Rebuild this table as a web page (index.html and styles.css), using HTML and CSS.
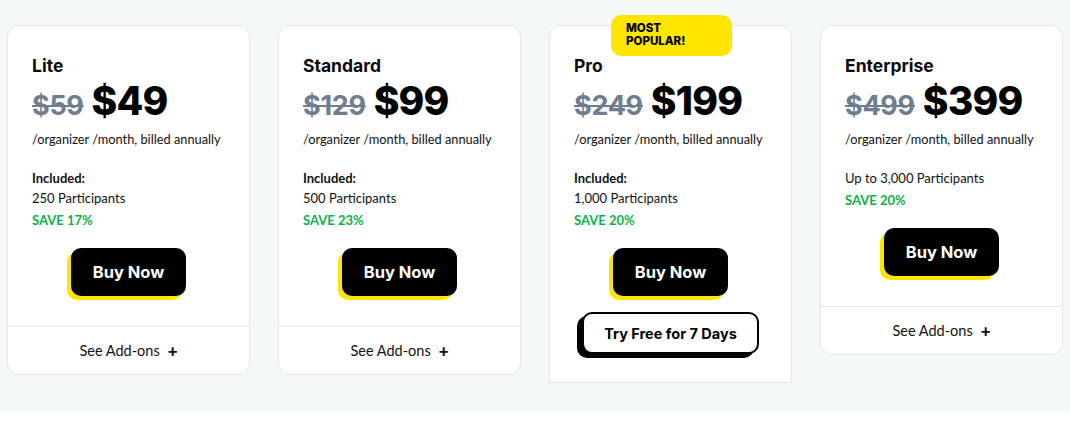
FILE: index.html
```html
<!DOCTYPE html>
<html>
<head>
<meta charset="utf-8">
<link rel="stylesheet" href="styles.css">
</head>
<body>
<section class="pricing">
  <div class="grid">
    <div class="card">
      <div class="card-body">
        <h3 class="plan">Lite</h3>
        <div class="price"><s class="old">$59</s> <span class="new">$49</span></div>
        <p class="per">/organizer /month, billed annually</p>
        <p class="inc-label">Included:</p>
        <p class="inc">250 Participants</p>
        <p class="save">SAVE 17%</p>
        <div class="actions"><a class="btn-buy">Buy Now</a></div>
      </div>
      <div class="addons">See Add-ons <span class="plus">+</span></div>
    </div>
    <div class="card">
      <div class="card-body">
        <h3 class="plan">Standard</h3>
        <div class="price"><s class="old">$129</s> <span class="new">$99</span></div>
        <p class="per">/organizer /month, billed annually</p>
        <p class="inc-label">Included:</p>
        <p class="inc">500 Participants</p>
        <p class="save">SAVE 23%</p>
        <div class="actions"><a class="btn-buy">Buy Now</a></div>
      </div>
      <div class="addons">See Add-ons <span class="plus">+</span></div>
    </div>
    <div class="card card-pro">
      <div class="badge">MOST<br>POPULAR!</div>
      <div class="card-body">
        <h3 class="plan">Pro</h3>
        <div class="price"><s class="old">$249</s> <span class="new">$199</span></div>
        <p class="per">/organizer /month, billed annually</p>
        <p class="inc-label">Included:</p>
        <p class="inc">1,000 Participants</p>
        <p class="save">SAVE 20%</p>
        <div class="actions">
          <a class="btn-buy">Buy Now</a>
          <a class="btn-try">Try Free for 7 Days</a>
        </div>
      </div>
    </div>
    <div class="card">
      <div class="card-body">
        <h3 class="plan">Enterprise</h3>
        <div class="price"><s class="old">$499</s> <span class="new">$399</span></div>
        <p class="per">/organizer /month, billed annually</p>
        <p class="inc inc-first">Up to 3,000 Participants</p>
        <p class="save">SAVE 20%</p>
        <div class="actions"><a class="btn-buy">Buy Now</a></div>
      </div>
      <div class="addons">See Add-ons <span class="plus">+</span></div>
    </div>
  </div>
</section>
</body>
</html>
```

FILE: styles.css
```css
* { box-sizing: border-box; }
body {
  margin: 0;
  background: #ffffff;
  font-family: "Lato", "Liberation Sans", sans-serif;
  color: #111;
}
.pricing {
  background: #f5f8f9;
  height: 411px;
  padding: 25px 7px 0;
}
.grid {
  display: grid;
  grid-template-columns: repeat(4, 243px);
  column-gap: 28px;
  align-items: start;
}
.card {
  position: relative;
  background: #fff;
  border: 1px solid #e2e6ea;
  border-radius: 12px;
}
.card-pro {
  border-radius: 12px 12px 0 0;
  height: 358px;
}
.card-body {
  padding: 29px 24px 0;
}
.plan {
  margin: 0;
  font-family: "Inter", sans-serif;
  font-size: 17.5px;
  font-weight: 700;
  line-height: 22px;
  color: #0b0b0b;
}
.price {
  display: flex;
  align-items: baseline;
  gap: 8px;
  margin-top: 0;
  height: 48px;
  font-family: "Inter", sans-serif;
  white-space: nowrap;
}
.old {
  font-size: 27px;
  font-weight: 700;
  color: #6e7e90;
  text-decoration-thickness: 2px;
  letter-spacing: -0.3px;
}
.new {
  font-size: 39px;
  font-weight: 800;
  color: #000;
  letter-spacing: -0.8px;
}
.per {
  margin: 6px 0 0;
  font-size: 12.8px;
  line-height: 16px;
  color: #111;
  white-space: nowrap;
}
.inc-label {
  margin: 23px 0 0;
  font-size: 13px;
  font-weight: 700;
  line-height: 16px;
}
.inc {
  margin: 4px 0 0;
  font-size: 13px;
  line-height: 16px;
}
.inc-first { margin-top: 23px; }
.save {
  margin: 6px 0 0;
  font-size: 13px;
  font-weight: 700;
  color: #0cb14b;
  line-height: 16px;
}
.actions {
  display: flex;
  flex-direction: column;
  align-items: center;
  gap: 16px;
  padding: 20px 0 30px;
}
.btn-buy {
  display: flex;
  align-items: center;
  justify-content: center;
  width: 115px;
  height: 48px;
  background: #000;
  color: #fff;
  font-family: "Inter", sans-serif;
  font-weight: 700;
  font-size: 16.5px;
  border-radius: 10px;
  box-shadow: -4px 4px 0 #ffe600;
}
.btn-try {
  display: flex;
  align-items: center;
  justify-content: center;
  width: 177px;
  height: 42px;
  background: #fff;
  color: #000;
  border: 2px solid #000;
  border-radius: 10px;
  font-family: "Inter", sans-serif;
  font-weight: 700;
  font-size: 14.5px;
  box-shadow: -5px 4px 0 #000;
}
.addons {
  border-top: 1px solid #e2e6ea;
  height: 48px;
  display: flex;
  align-items: center;
  justify-content: center;
  gap: 8px;
  font-size: 14.5px;
  color: #111;
}
.plus {
  font-weight: 900;
  font-size: 17px;
}
.badge {
  position: absolute;
  top: -11px;
  left: 61px;
  width: 121px;
  height: 41px;
  background: #ffe600;
  border-radius: 10px;
  padding: 7px 15px;
  font-family: "Inter", sans-serif;
  font-size: 11.5px;
  line-height: 13px;
  font-weight: 800;
  color: #000;
}
```
